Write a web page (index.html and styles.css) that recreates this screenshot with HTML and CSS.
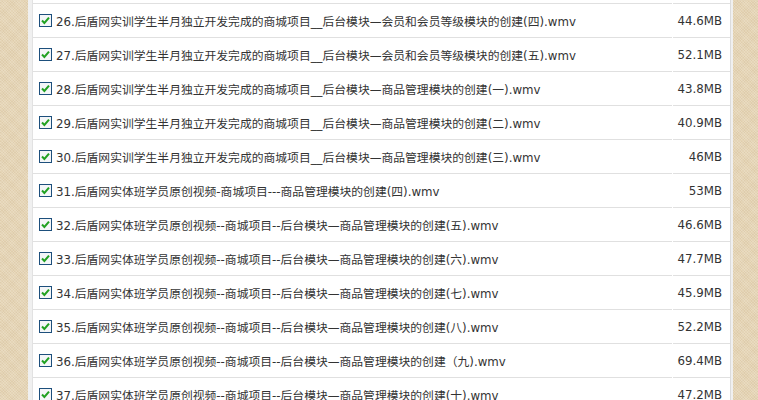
FILE: index.html
```html
<!DOCTYPE html>
<html lang="zh-CN">
<head>
  <meta charset="UTF-8">
  <title>课程文件列表</title>
  <link rel="stylesheet" href="styles.css">
</head>
<body>
  <div class="frame">
    <div class="files">
      <div class="row prev">
        <div class="name"></div>
        <div class="size"></div>
      </div>
      <div class="row">
        <div class="name"><svg class="check" viewBox="0 0 13 13"><rect x="0.5" y="0.5" width="12" height="12" fill="#f4f6f8" stroke="#1d4f7c"/><path d="M3 6.5 L5.4 9 L10 3.6" fill="none" stroke="#21a121" stroke-width="2"/></svg><span>26.后盾网实训学生半月独立开发完成的商城项目__后台模块—会员和会员等级模块的创建(四).wmv</span></div>
        <div class="size">44.6MB</div>
      </div>
      <div class="row">
        <div class="name"><svg class="check" viewBox="0 0 13 13"><rect x="0.5" y="0.5" width="12" height="12" fill="#f4f6f8" stroke="#1d4f7c"/><path d="M3 6.5 L5.4 9 L10 3.6" fill="none" stroke="#21a121" stroke-width="2"/></svg><span>27.后盾网实训学生半月独立开发完成的商城项目__后台模块—会员和会员等级模块的创建(五).wmv</span></div>
        <div class="size">52.1MB</div>
      </div>
      <div class="row">
        <div class="name"><svg class="check" viewBox="0 0 13 13"><rect x="0.5" y="0.5" width="12" height="12" fill="#f4f6f8" stroke="#1d4f7c"/><path d="M3 6.5 L5.4 9 L10 3.6" fill="none" stroke="#21a121" stroke-width="2"/></svg><span>28.后盾网实训学生半月独立开发完成的商城项目__后台模块—商品管理模块的创建(一).wmv</span></div>
        <div class="size">43.8MB</div>
      </div>
      <div class="row">
        <div class="name"><svg class="check" viewBox="0 0 13 13"><rect x="0.5" y="0.5" width="12" height="12" fill="#f4f6f8" stroke="#1d4f7c"/><path d="M3 6.5 L5.4 9 L10 3.6" fill="none" stroke="#21a121" stroke-width="2"/></svg><span>29.后盾网实训学生半月独立开发完成的商城项目__后台模块—商品管理模块的创建(二).wmv</span></div>
        <div class="size">40.9MB</div>
      </div>
      <div class="row">
        <div class="name"><svg class="check" viewBox="0 0 13 13"><rect x="0.5" y="0.5" width="12" height="12" fill="#f4f6f8" stroke="#1d4f7c"/><path d="M3 6.5 L5.4 9 L10 3.6" fill="none" stroke="#21a121" stroke-width="2"/></svg><span>30.后盾网实训学生半月独立开发完成的商城项目__后台模块—商品管理模块的创建(三).wmv</span></div>
        <div class="size">46MB</div>
      </div>
      <div class="row">
        <div class="name"><svg class="check" viewBox="0 0 13 13"><rect x="0.5" y="0.5" width="12" height="12" fill="#f4f6f8" stroke="#1d4f7c"/><path d="M3 6.5 L5.4 9 L10 3.6" fill="none" stroke="#21a121" stroke-width="2"/></svg><span>31.后盾网实体班学员原创视频-商城项目---商品管理模块的创建(四).wmv</span></div>
        <div class="size">53MB</div>
      </div>
      <div class="row">
        <div class="name"><svg class="check" viewBox="0 0 13 13"><rect x="0.5" y="0.5" width="12" height="12" fill="#f4f6f8" stroke="#1d4f7c"/><path d="M3 6.5 L5.4 9 L10 3.6" fill="none" stroke="#21a121" stroke-width="2"/></svg><span>32.后盾网实体班学员原创视频--商城项目--后台模块—商品管理模块的创建(五).wmv</span></div>
        <div class="size">46.6MB</div>
      </div>
      <div class="row">
        <div class="name"><svg class="check" viewBox="0 0 13 13"><rect x="0.5" y="0.5" width="12" height="12" fill="#f4f6f8" stroke="#1d4f7c"/><path d="M3 6.5 L5.4 9 L10 3.6" fill="none" stroke="#21a121" stroke-width="2"/></svg><span>33.后盾网实体班学员原创视频--商城项目--后台模块—商品管理模块的创建(六).wmv</span></div>
        <div class="size">47.7MB</div>
      </div>
      <div class="row">
        <div class="name"><svg class="check" viewBox="0 0 13 13"><rect x="0.5" y="0.5" width="12" height="12" fill="#f4f6f8" stroke="#1d4f7c"/><path d="M3 6.5 L5.4 9 L10 3.6" fill="none" stroke="#21a121" stroke-width="2"/></svg><span>34.后盾网实体班学员原创视频--商城项目--后台模块—商品管理模块的创建(七).wmv</span></div>
        <div class="size">45.9MB</div>
      </div>
      <div class="row">
        <div class="name"><svg class="check" viewBox="0 0 13 13"><rect x="0.5" y="0.5" width="12" height="12" fill="#f4f6f8" stroke="#1d4f7c"/><path d="M3 6.5 L5.4 9 L10 3.6" fill="none" stroke="#21a121" stroke-width="2"/></svg><span>35.后盾网实体班学员原创视频--商城项目--后台模块—商品管理模块的创建(八).wmv</span></div>
        <div class="size">52.2MB</div>
      </div>
      <div class="row">
        <div class="name"><svg class="check" viewBox="0 0 13 13"><rect x="0.5" y="0.5" width="12" height="12" fill="#f4f6f8" stroke="#1d4f7c"/><path d="M3 6.5 L5.4 9 L10 3.6" fill="none" stroke="#21a121" stroke-width="2"/></svg><span>36.后盾网实体班学员原创视频--商城项目--后台模块—商品管理模块的创建（九).wmv</span></div>
        <div class="size">69.4MB</div>
      </div>
      <div class="row">
        <div class="name"><svg class="check" viewBox="0 0 13 13"><rect x="0.5" y="0.5" width="12" height="12" fill="#f4f6f8" stroke="#1d4f7c"/><path d="M3 6.5 L5.4 9 L10 3.6" fill="none" stroke="#21a121" stroke-width="2"/></svg><span>37.后盾网实体班学员原创视频--商城项目--后台模块—商品管理模块的创建(十).wmv</span></div>
        <div class="size">47.2MB</div>
      </div>
    </div>
  </div>
</body>
</html>
```

FILE: styles.css
```css
body {
  margin: 0;
  height: 400px;
  overflow: hidden;
  background-color: #e5d4b4;
  background-image:
    repeating-linear-gradient(45deg, rgba(255, 255, 255, 0.16) 0 1px, transparent 1px 2px),
    repeating-linear-gradient(-45deg, rgba(150, 120, 80, 0.08) 0 1px, transparent 1px 2px);
}

.frame {
  margin: 0 25px 0 28px;
  padding: 0 2px 0 4px;
  background: #f0f0f0;
  height: 400px;
}

.files {
  background: #fff;
  border-left: 1px solid #e2e2e2;
  border-right: 1px solid #dcdcdc;
  height: 400px;
  font-family: "DejaVu Sans", "Noto Sans CJK SC", sans-serif;
  font-size: 11.8px;
  color: #333;
}

.row {
  display: grid;
  grid-template-columns: 1fr 57px;
  column-gap: 1px;
  height: 34px;
}

.row.prev {
  height: 4px;
}

.name,
.size {
  display: flex;
  align-items: center;
  border-bottom: 1px solid #e0e0e0;
}

.name {
  padding-left: 6px;
  gap: 4px;
  white-space: nowrap;
}

.size {
  justify-content: flex-end;
  padding-right: 8px;
}

.check {
  width: 13px;
  height: 13px;
  flex: none;
}
```
